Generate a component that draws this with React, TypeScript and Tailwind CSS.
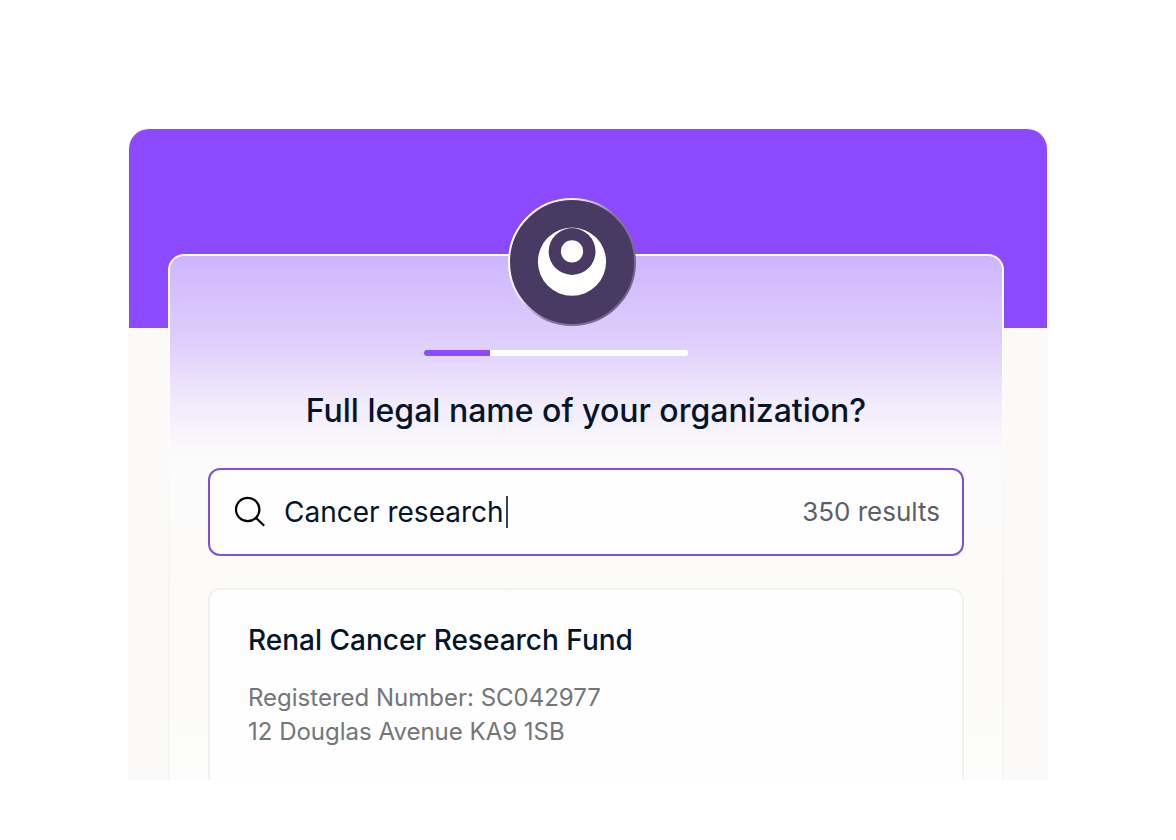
import React, { useState } from 'react';

interface Organization {
  name: string;
  registeredNumber: string;
  address: string;
}

const organizations: Organization[] = [
  {
    name: 'Renal Cancer Research Fund',
    registeredNumber: 'SC042977',
    address: '12 Douglas Avenue KA9 1SB',
  },
];

function Logo() {
  return (
    <svg
      viewBox="0 0 128 128"
      className="-mt-[58px] mr-7 size-32 shrink-0"
      role="img"
      aria-label="Logo"
    >
      <defs>
        <linearGradient id="ring" x1="0.05" y1="0.3" x2="0.85" y2="0.8">
          <stop offset="0" stopColor="#ffffff" />
          <stop offset="0.3" stopColor="#f1e9fb" />
          <stop offset="0.6" stopColor="#85769f" />
          <stop offset="1" stopColor="#75668f" />
        </linearGradient>
      </defs>
      <circle cx="64" cy="64" r="63" fill="#483a63" stroke="url(#ring)" strokeWidth="2" />
      <circle cx="64" cy="63.7" r="34.1" fill="#ffffff" />
      <circle cx="64.1" cy="53.5" r="23.4" fill="#483a63" />
      <circle cx="64" cy="53.4" r="11.1" fill="#ffffff" />
    </svg>
  );
}

function SearchIcon() {
  return (
    <svg
      viewBox="0 0 32 32"
      className="size-8 shrink-0"
      fill="none"
      stroke="#000000"
      strokeWidth="2.2"
      aria-hidden="true"
    >
      <circle cx="13.7" cy="13.5" r="11.7" />
      <path d="M21.8 21.8 L30.2 29.8" />
    </svg>
  );
}

function ProgressBar({ value }: { value: number }) {
  return (
    <div
      role="progressbar"
      aria-valuenow={value}
      className="mt-6 mr-[60px] h-1.5 w-[264px] overflow-hidden rounded-full bg-white"
    >
      <div className="h-full bg-[#8b4aff]" style={{ width: `${value}%` }} />
    </div>
  );
}

function ResultCard({ name, registeredNumber, address }: Organization) {
  return (
    <article className="w-full grow rounded-t-xl border-2 border-b-0 border-[#f1f1f0] bg-[#fefefe] px-[38px] pt-8">
      <h2 className="text-[28px] leading-9 font-medium text-[#03152b]">{name}</h2>
      <p className="mt-[23px] text-[24px] leading-[34px] text-[#737577]">
        Registered Number: {registeredNumber}
        <br />
        {address}
      </p>
    </article>
  );
}

export default function App() {
  const [query, setQuery] = useState('Cancer research');

  return (
    <div className="min-h-screen bg-white px-32 pt-32 pb-[60px] font-['Inter',sans-serif]">
      <div className="flex min-h-[652px] flex-col overflow-hidden rounded-t-[20px] bg-[#fbfaf8]">
        {/* Banner */}
        <div className="mx-px mt-px h-[199px] rounded-t-[20px] bg-[#8b4aff]" />

        {/* Form card */}
        <main className="-mt-[74px] mr-11 ml-10 flex grow flex-col rounded-t-2xl bg-linear-to-b from-white from-[74px] to-[#f5f5f4] to-[340px] px-0.5 pt-0.5">
          <div className="flex grow flex-col items-center rounded-t-[14px] bg-[linear-gradient(to_bottom,#ceb5ff_0px,#e0d0fc_90px,#f1eafc_145px,#fcfbfb_200px,#fcfcfa_100%)] px-[38px]">
            <Logo />
            <ProgressBar value={25} />
            <h1 className="mt-9 text-center text-[32px] leading-[38px] font-medium text-[#03152b]">
              Full legal name of your organization?
            </h1>

            <label className="mt-[38px] flex h-[88px] w-full items-center rounded-xl border-2 border-[#8250df] bg-[#fefefe] pr-[22px] pl-6">
              <SearchIcon />
              <input
                type="text"
                aria-label="Organization name"
                value={query}
                onChange={(e) => setQuery(e.target.value)}
                className="ml-[18px] field-sizing-content text-[28px] leading-9 text-[#03152b] outline-none"
              />
              {/* Caret */}
              <span className="ml-0.5 h-8 w-0.5 bg-[#34435a]" />
              <span className="ml-auto text-[26px] leading-9 text-[#5a5f69]">350 results</span>
            </label>

            <div className="mt-8 flex w-full grow flex-col">
              {organizations.map((organization) => (
                <ResultCard key={organization.registeredNumber} {...organization} />
              ))}
            </div>
          </div>
        </main>
      </div>
    </div>
  );
}
